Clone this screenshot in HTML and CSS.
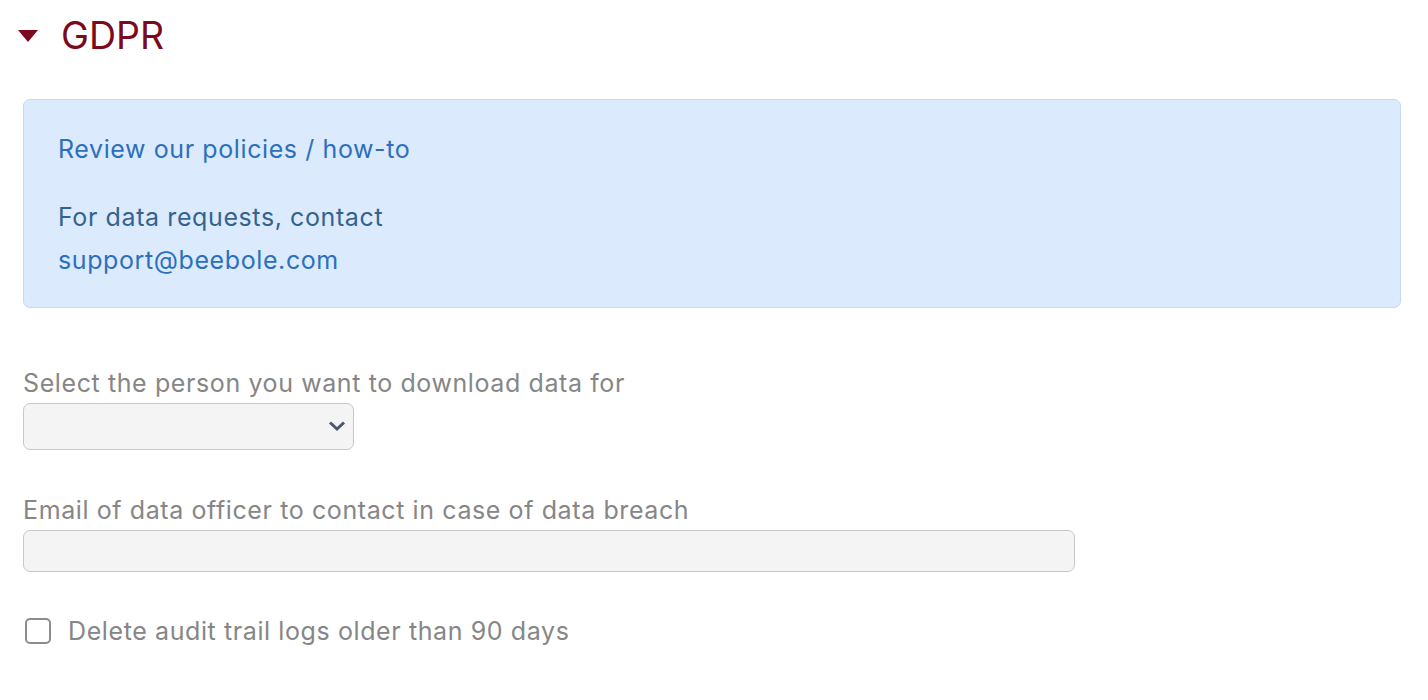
FILE: index.html
```html
<!DOCTYPE html>
<html>
<head>
<meta charset="utf-8">
<link rel="stylesheet" href="styles.css">
</head>
<body>
<div class="page">
  <h2 class="section-title">
    <svg class="caret" width="20" height="12" viewBox="0 0 20 12"><polygon points="0,0 20,0 10,12" fill="#7b0a1c"/></svg>
    <span>GDPR</span>
  </h2>
  <div class="info">
    <p><a href="#">Review our policies / how-to</a></p>
    <p>For data requests, contact<br><a href="#">support@beebole.com</a></p>
  </div>
  <div class="field">
    <label class="label">Select the person you want to download data for</label>
    <div class="select">
      <svg class="chev" width="18" height="12" viewBox="0 0 18 12"><polyline points="2,2.5 9,9 16,2.5" fill="none" stroke="#4f5670" stroke-width="3"/></svg>
    </div>
  </div>
  <div class="field">
    <label class="label">Email of data officer to contact in case of data breach</label>
    <div class="input"></div>
  </div>
  <div class="check-row">
    <span class="box"></span>
    <span class="check-label">Delete audit trail logs older than 90 days</span>
  </div>
</div>
</body>
</html>
```
FILE: styles.css
```css
* { box-sizing: border-box; }
body {
  margin: 0;
  background: #fff;
  font-family: Inter, "Noto Sans", sans-serif;
}
.page {
  padding: 12px 28px 0 23px;
}
.section-title {
  display: flex;
  align-items: center;
  gap: 23px;
  margin: 0 0 41px 0;
  font-weight: 400;
  font-size: 37.5px;
  color: #7b0a1c;
  height: 46px;
}
.caret { margin-left: -5px; margin-top: 2px; }
.info {
  width: 1378px;
  background: #dceafd;
  border: 1px solid #c6daf2;
  border-radius: 7px;
  padding: 28px 34px 25px;
  font-size: 25px;
  letter-spacing: 0.6px;
  line-height: 43px;
  color: #33638f;
}
.info p { margin: 0; }
.info p + p { margin-top: 25px; }
.info a { color: #2c70bc; text-decoration: none; }
.field { margin-top: 58px; }
.field + .field { margin-top: 43px; }
.label {
  display: block;
  font-size: 25px;
  letter-spacing: 0.6px;
  line-height: 34px;
  margin-bottom: 3px;
  color: #868686;
}
.select {
  position: relative;
  width: 331px;
  height: 47px;
  background: #f4f4f4;
  border: 1.5px solid #c8c8c8;
  border-radius: 7px;
}
.chev { position: absolute; right: 7px; top: 16px; }
.input {
  width: 1052px;
  height: 42px;
  background: #f4f4f4;
  border: 1.5px solid #c8c8c8;
  border-radius: 7px;
}
.check-row {
  display: flex;
  align-items: center;
  gap: 17px;
  margin-top: 44px;
  padding-left: 2px;
}
.box {
  width: 26px;
  height: 26px;
  border: 2px solid #8c8c8c;
  border-radius: 5px;
  background: #fff;
}
.check-label {
  font-size: 25px;
  letter-spacing: 0.6px;
  color: #868686;
}
```
